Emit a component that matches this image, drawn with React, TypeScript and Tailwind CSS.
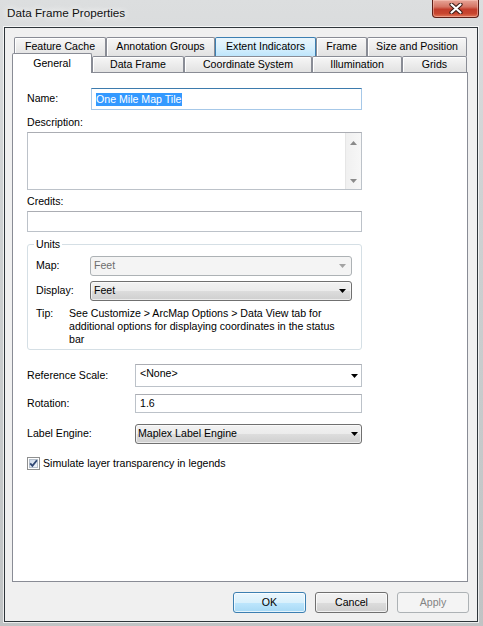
import React from "react";

function Arrow({ color = "#000" }: { color?: string }) {
  return (
    <svg width="7" height="4" viewBox="0 0 7 4">
      <path d="M0 0H7L3.5 4Z" fill={color} />
    </svg>
  );
}

function UpArrow({ color = "#8a8a8a" }: { color?: string }) {
  return (
    <svg width="7" height="4" viewBox="0 0 7 4">
      <path d="M0 4H7L3.5 0Z" fill={color} />
    </svg>
  );
}

const tabBase =
  "h-[19px] border border-b-0 border-[#898c95] rounded-t-[2px] flex items-center justify-center bg-[linear-gradient(180deg,#f7f7f7_0%,#ececec_50%,#e2e2e2_100%)] shadow-[inset_1px_1px_0_#ffffff]";
const tabBase2 =
  "h-[16px] border border-b-0 border-[#898c95] rounded-t-[2px] flex items-center justify-center bg-[linear-gradient(180deg,#f7f7f7_0%,#ececec_50%,#e2e2e2_100%)] shadow-[inset_1px_1px_0_#ffffff]";

const textBox = "border border-[#bcc2c9] border-t-[#abadb3] bg-white";

export default function App() {
  return (
    <div className="w-[483px] h-[626px] overflow-hidden flex flex-col bg-[linear-gradient(180deg,#dcdedf_0%,#cfd2d3_30%,#c0c3c4_100%)] [font-family:'Liberation_Sans',Arial,sans-serif] text-[10.6px] text-black">
      {/* Title bar */}
      <div className="h-[27px] shrink-0 flex items-start justify-between">
        <div className="pl-[7px] pt-[5px] text-[11.7px] leading-[16px] text-[#111] [text-shadow:0_0_6px_#ffffff,0_0_10px_#ffffff]">
          Data Frame Properties
        </div>
        <div className="w-[47px] h-[18px] mr-[4px] rounded-b-[4px] border border-t-0 border-[#5e1f17] bg-[linear-gradient(180deg,#e7a597_0%,#d57564_40%,#c23d2b_55%,#c8462f_80%,#e2785a_100%)] shadow-[inset_0_0_0_1px_rgba(255,210,200,0.45)] flex items-center justify-center">
          <svg width="14" height="11" viewBox="0 0 14 11">
            <path d="M2.5 1.5L11.5 9.5M11.5 1.5L2.5 9.5" stroke="#3a1a14" strokeWidth="4.2" strokeLinecap="round" />
            <path d="M2.5 1.5L11.5 9.5M11.5 1.5L2.5 9.5" stroke="#ffffff" strokeWidth="2.2" strokeLinecap="round" />
          </svg>
        </div>
      </div>

      {/* Client area */}
      <div className="ml-[4px] mr-[5px] h-[595px] border border-[#2e353a] shadow-[0_0_0_1px_rgba(255,255,255,0.7)] bg-[#f0f0f0] flex flex-col pl-[7px] pt-[9px]">
        {/* Tab row 1 */}
        <div className="flex ml-[2px] h-[19px]">
          <div className={`${tabBase} w-[92px]`}>Feature Cache</div>
          <div className={`${tabBase} w-[109px]`}>Annotation Groups</div>
          <div className="h-[19px] w-[101px] border border-b-0 border-[#3c7fb1] rounded-t-[2px] flex items-center justify-center bg-[linear-gradient(180deg,#eaf6fd_0%,#d9f0fc_50%,#bee6fd_100%)]">
            Extent Indicators
          </div>
          <div className={`${tabBase} w-[51px]`}>Frame</div>
          <div className={`${tabBase} w-[100px]`}>Size and Position</div>
        </div>
        {/* Tab row 2 */}
        <div className="flex h-[16px] items-end">
          <div className="relative z-10 w-[80px] h-[20px] -mb-[1px] bg-white border border-b-0 border-[#898c95] rounded-t-[2px] flex items-center justify-center">
            General
          </div>
          <div className={`${tabBase2} w-[92px]`}>Data Frame</div>
          <div className={`${tabBase2} w-[128px]`}>Coordinate System</div>
          <div className={`${tabBase2} w-[90px]`}>Illumination</div>
          <div className={`${tabBase2} w-[65px]`}>Grids</div>
        </div>

        {/* Panel */}
        <div className="w-[456px] h-[510px] shrink-0 border border-[#898c95] bg-white pl-[14px] pt-[15px] flex flex-col">
          <div className="w-[335px] flex flex-col">
            {/* Name */}
            <div className="flex items-center h-[22px]">
              <span className="w-[64px]">Name:</span>
              <div className="w-[271px] h-[22px] border border-[#a6c8e8] border-t-[#3d7bad] bg-white flex items-center pl-[4px]">
                <span className="bg-[#3399ff] text-white leading-[13px] pr-[1px]">One Mile Map Tile</span>
              </div>
            </div>

            {/* Description */}
            <div className="mt-[6px] leading-[13px]">Description:</div>
            <div className={`mt-[3px] h-[58px] ${textBox} flex justify-end`}>
              <div className="w-[16px] h-full bg-[linear-gradient(90deg,#f0f0f0,#f7f7f7)] border-l border-[#e6e6e6] flex flex-col items-center justify-between pt-[8px] pb-[6px]">
                <UpArrow />
                <Arrow color="#8a8a8a" />
              </div>
            </div>

            {/* Credits */}
            <div className="mt-[5px] leading-[13px]">Credits:</div>
            <div className={`mt-[3px] h-[21px] ${textBox}`} />

            {/* Units */}
            <fieldset className="mt-[6px] border border-[#d5dfe5] rounded-[3px] pl-[8px] pr-[9px] pt-[5px] pb-[3px]">
              <legend className="-ml-[2px] px-[2px] leading-[13px]">Units</legend>
              <div className="flex items-center h-[20px]">
                <span className="w-[54px]">Map:</span>
                <div className="w-[262px] h-[20px] border border-[#adb2b5] rounded-[3px] bg-[#f4f4f4] flex items-center justify-between pl-[3px] pr-[5px] text-[#6d6d6d]">
                  <span>Feet</span>
                  <Arrow color="#a3a3a3" />
                </div>
              </div>
              <div className="mt-[5px] flex items-center h-[20px]">
                <span className="w-[54px]">Display:</span>
                <div className="w-[262px] h-[20px] border border-[#707070] rounded-[3px] bg-[linear-gradient(180deg,#f2f2f2_0%,#ebebeb_50%,#dddddd_50%,#cfcfcf_100%)] shadow-[inset_0_0_0_1px_rgba(255,255,255,0.6)] flex items-center justify-between pl-[3px] pr-[5px]">
                  <span>Feet</span>
                  <Arrow />
                </div>
              </div>
              <div className="mt-[6px] flex leading-[13px]">
                <span className="w-[33px] shrink-0">Tip:</span>
                <div className="flex flex-col whitespace-nowrap">
                  <span>See Customize &gt; ArcMap Options &gt; Data View tab for</span>
                  <span>additional options for displaying coordinates in the status</span>
                  <span>bar</span>
                </div>
              </div>
            </fieldset>

            {/* Reference Scale */}
            <div className="mt-[14px] flex items-center h-[23px]">
              <span className="w-[108px]">Reference Scale:</span>
              <div className={`w-[227px] h-[23px] ${textBox} flex items-center justify-between pl-[4px] pr-[3px]`}>
                <span className="pb-[3px]">{"<None>"}</span>
                <span className="pt-[1px]">
                  <Arrow />
                </span>
              </div>
            </div>

            {/* Rotation */}
            <div className="mt-[7px] flex items-center h-[19px]">
              <span className="w-[108px]">Rotation:</span>
              <div className={`w-[227px] h-[19px] ${textBox} flex items-center pl-[4px]`}>1.6</div>
            </div>

            {/* Label Engine */}
            <div className="mt-[11px] flex items-center h-[20px]">
              <span className="w-[108px]">Label Engine:</span>
              <div className="w-[227px] h-[20px] border border-[#707070] rounded-[3px] bg-[linear-gradient(180deg,#f2f2f2_0%,#ebebeb_50%,#dddddd_50%,#cfcfcf_100%)] shadow-[inset_0_0_0_1px_rgba(255,255,255,0.6)] flex items-center justify-between pl-[2px] pr-[3px]">
                <span>Maplex Label Engine</span>
                <Arrow />
              </div>
            </div>

            {/* Checkbox */}
            <div className="mt-[13px] flex items-center h-[13px] gap-[3px]">
              <svg width="13" height="13" viewBox="0 0 13 13">
                <defs>
                  <linearGradient id="cbg" x1="0" y1="0" x2="1" y2="1">
                    <stop offset="0" stopColor="#cbd7e8" />
                    <stop offset="1" stopColor="#f4f7fb" />
                  </linearGradient>
                </defs>
                <rect x="0.5" y="0.5" width="12" height="12" fill="#ffffff" stroke="#8e8f8f" />
                <rect x="2.5" y="2.5" width="8" height="8" fill="url(#cbg)" stroke="#b6c0cc" />
                <path d="M3.2 6.3L5.4 8.8L9.9 3.2" stroke="#2f4774" strokeWidth="1.8" fill="none" />
              </svg>
              <span>Simulate layer transparency in legends</span>
            </div>
          </div>
        </div>

        {/* Buttons */}
        <div className="mt-[10px] flex justify-end gap-[9px] pr-[8px]">
          <div className="w-[73px] h-[21px] border border-[#3c7fb1] rounded-[3px] bg-[linear-gradient(180deg,#eaf6fd_0%,#d9f0fc_50%,#bee6fd_50%,#a7d9f5_100%)] shadow-[inset_0_0_0_1px_rgba(255,255,255,0.7)] flex items-center justify-center">
            OK
          </div>
          <div className="w-[73px] h-[21px] border border-[#707070] rounded-[3px] bg-[linear-gradient(180deg,#f2f2f2_0%,#ebebeb_50%,#dddddd_50%,#cfcfcf_100%)] shadow-[inset_0_0_0_1px_rgba(255,255,255,0.7)] flex items-center justify-center">
            Cancel
          </div>
          <div className="w-[72px] h-[21px] border border-[#adb2b5] rounded-[3px] bg-[#f4f4f4] flex items-center justify-center text-[#838383]">
            Apply
          </div>
        </div>
      </div>
    </div>
  );
}
